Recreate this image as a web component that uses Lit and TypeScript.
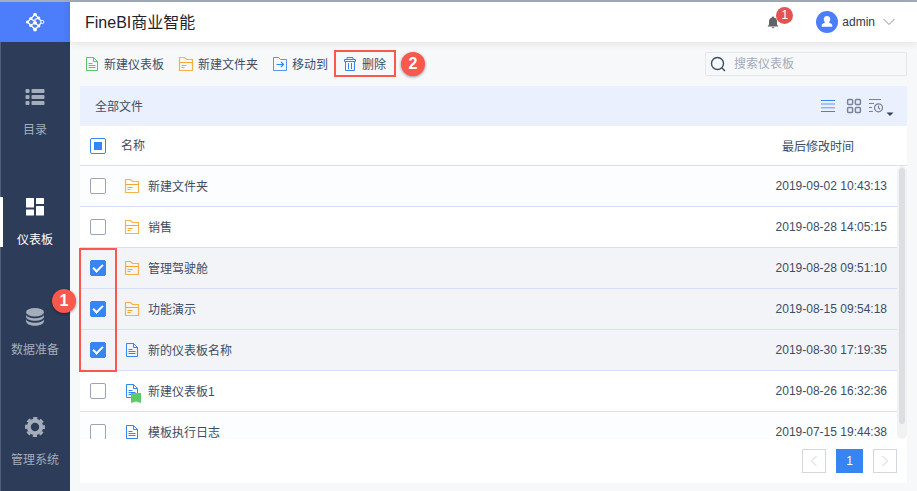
import { LitElement, html, css, svg, nothing } from "lit";
import { customElement, state } from "lit/decorators.js";
import { classMap } from "lit/directives/class-map.js";

type Kind = "folder" | "doc" | "flagged";

interface Entry {
  name: string;
  time: string;
  kind: Kind;
  checked: boolean;
}

const docShape = svg`
  <path d="M2.500 1.500h7l4 4v9h-11z" />
  <path d="M9.500 1.500v4h4M4.500 7.500h4M4.500 9.500h7M4.500 11.500h7" />`;

const folderShape = svg`
  <path d="M1.500 14.500v-13h5l2 2h6v11z" stroke-width="1.200" opacity=".85" />
  <path d="M1.500 6.500h13M3.500 9.500h5M3.500 11.500h3" />`;

const icons = {
  logo: html`<svg class="logo" viewBox="0 0 20 20" width="20" height="20" aria-hidden="true">
    <g fill="none" stroke="#fff" stroke-width="1.200">
      <path d="M10 2.500 2.500 10l7.500 7.500M10 2.500l3.500 3.500M10 17.500l3.500-3.500M5.800 6.500 9 9M5.800 13.500 10 10.500l3.500 3.500M13.500 6 10 7.500v3M13.500 6 16 9M13.500 14 16 11" />
    </g>
    <g fill="#fff">
      <circle cx="10" cy="2.500" r="1.800" /><circle cx="2.500" cy="10" r="1.600" />
      <circle cx="10" cy="17.500" r="2" /><circle cx="5.800" cy="6.500" r="1.600" />
      <circle cx="5.800" cy="13.500" r="1.600" /><circle cx="10" cy="10.800" r="1.900" />
      <circle cx="13.800" cy="6" r="1.500" /><circle cx="13.800" cy="14" r="1.600" />
    </g>
    <circle cx="17.300" cy="10" r="1.600" fill="#4c7dfa" stroke="#fff" />
  </svg>`,
  catalog: html`<svg viewBox="0 0 20 20" width="20" height="20" fill="currentColor" aria-hidden="true">
    <rect x="0.500" y="2" width="4" height="4" rx="1" /><rect x="6.500" y="2" width="13" height="4" rx="1" />
    <rect x="0.500" y="8" width="4" height="4" rx="1" /><rect x="6.500" y="8" width="13" height="4" rx="1" />
    <rect x="0.500" y="14" width="4" height="4" rx="1" /><rect x="6.500" y="14" width="13" height="4" rx="1" />
  </svg>`,
  board: html`<svg viewBox="0 0 20 20" width="20" height="20" fill="currentColor" aria-hidden="true">
    <rect x="1" y="1" width="8" height="9.500" rx=".5" /><rect x="11" y="1" width="8" height="6" rx=".5" />
    <rect x="1" y="12.500" width="8" height="6" rx=".5" /><rect x="11" y="9" width="8" height="9.500" rx=".5" />
  </svg>`,
  data: html`<svg viewBox="0 0 20 20" width="20" height="20" fill="currentColor" aria-hidden="true">
    <ellipse cx="10" cy="5.200" rx="9" ry="4.200" />
    <path d="M1 7.500c1 5 17 5 18 0v2.300c-1 5.400-17 5.400-18 0z" />
    <path d="M1 12c1 5 17 5 18 0v2.300c-1 6-17 6-18 0z" />
  </svg>`,
  gear: html`<svg viewBox="0 0 20 20" width="20" height="20" aria-hidden="true">
    <g fill="none" stroke="currentColor">
      <circle cx="10" cy="10" r="6.200" stroke-width="4" />
      <circle cx="10" cy="10" r="8.900" stroke-width="2.200" stroke-dasharray="4.200 2.790" stroke-dashoffset="2.100" />
    </g>
  </svg>`,
  bell: html`<svg viewBox="0 0 12 13" width="12" height="13" fill="#5f6368" aria-hidden="true">
    <path d="M6 .5c.7 0 1 .5 1 1 2 .5 3 2 3 4v3l1.500 2H.5L2 8.500v-3c0-2 1-3.500 3-4 0-.5.3-1 1-1zM4.500 11.300h3c-.3 1.300-2.700 1.300-3 0z" />
  </svg>`,
  avatar: html`<svg viewBox="0 0 22 22" width="22" height="22" aria-hidden="true">
    <circle cx="11" cy="11" r="11" fill="#4c7dfa" />
    <path d="M11 5c2.200 0 3.300 1.500 3.200 3.400-.1 1.300-.8 2.300-1.500 2.900.5 1 3.600 1 3.600 3.200v1.200H5.700v-1.200c0-2.200 3.100-2.200 3.600-3.200-.7-.6-1.400-1.600-1.500-2.900C7.700 6.500 8.800 5 11 5z" fill="#fff" />
  </svg>`,
  chevron: html`<svg viewBox="0 0 12 8" width="12" height="8" fill="none" stroke="#8a8f96" aria-hidden="true"><path d="M.5 1 6 6.500 11.500 1" /></svg>`,
  newDoc: html`<svg viewBox="0 0 16 16" width="16" height="16" fill="none" stroke="#5cc768" aria-hidden="true">${docShape}</svg>`,
  doc: html`<svg viewBox="0 0 16 16" width="16" height="16" fill="none" stroke="#3685f2" aria-hidden="true">${docShape}</svg>`,
  folder: html`<svg viewBox="0 0 16 16" width="16" height="16" fill="none" stroke="#f5a62c" aria-hidden="true">${folderShape}</svg>`,
  move: html`<svg viewBox="0 0 16 16" width="16" height="16" fill="none" stroke="#3685f2" aria-hidden="true">
    <path d="M1.500 14.500v-13h5l2 2h6v11z" opacity=".85" /><path d="M4.500 8.500h7M9 6l2.500 2.500L9 11" stroke-width="1.200" />
  </svg>`,
  trash: html`<svg viewBox="0 0 16 16" width="16" height="16" fill="none" stroke="#3685f2" aria-hidden="true">
    <path d="M5 3.500v-2h6v2M2.500 3.500h11v2h-11zM3.500 5.500v9h9v-9M6.500 7v6M9.500 7v6" />
  </svg>`,
  flag: html`<svg class="flag" viewBox="0 0 10 10" width="10" height="10" fill="#5cc96b" aria-hidden="true"><path d="M0 0h10v10L5 8.500 0 10z" /></svg>`,
  search: html`<svg viewBox="0 0 16 16" width="16" height="16" fill="none" stroke="#3d4d66" stroke-width="1.400" aria-hidden="true">
    <circle cx="7.500" cy="7.500" r="6" /><path d="m12 12 3 3" />
  </svg>`,
  list: html`<svg viewBox="0 0 16 16" width="16" height="16" fill="none" stroke="#3685f2" aria-hidden="true">
    <path d="M1 2.500h14M1 13.500h14" /><path d="M1 6h14M1 9.800h14" opacity=".8" />
  </svg>`,
  grid: html`<svg viewBox="0 0 16 16" width="16" height="16" fill="none" stroke="#76839a" stroke-width="1.500" aria-hidden="true">
    <rect x="1.600" y="1.600" width="5" height="5" rx="1" /><rect x="9.400" y="1.600" width="5" height="5" rx="1" />
    <rect x="1.600" y="9.400" width="5" height="5" rx="1" /><rect x="9.400" y="9.400" width="5" height="5" rx="1" />
  </svg>`,
  sort: html`<svg viewBox="0 0 26 20" width="26" height="20" fill="none" stroke="#76839a" stroke-width="1.200" aria-hidden="true">
    <path d="M1 1.500h12M1 5.500h5M1 9.500h3M1 13.500h4" /><circle cx="10.500" cy="9.800" r="4" /><path d="M10.500 7.500v2.500l1.500 1.200" />
    <path d="M18.500 14.500h7L22 18z" fill="#33435e" stroke="none" />
  </svg>`,
  prev: html`<svg viewBox="0 0 8 12" width="8" height="12" fill="none" stroke="#cdd1d8" aria-hidden="true"><path d="M6.500 1 1.500 6l5 5" /></svg>`,
  next: html`<svg viewBox="0 0 8 12" width="8" height="12" fill="none" stroke="#cdd1d8" aria-hidden="true"><path d="m1.500 1 5 5-5 5" /></svg>`,
};

const base = css`
  * {
    box-sizing: border-box;
  }
  button {
    display: flex;
    align-items: center;
    margin: 0;
    padding: 0;
    border: 0;
    background: none;
    color: inherit;
    font: inherit;
    cursor: pointer;
  }
  svg {
    display: block;
    flex: none;
  }
  .text {
    padding-top: 2px;
  }
`;

@customElement("side-nav")
export class SideNav extends LitElement {
  static styles = [
    base,
    css`
      :host {
        display: flex;
        flex-direction: column;
        background: #2d3d59;
        border-left: 1px solid #51607a;
      }
      .brand {
        display: flex;
        align-items: center;
        justify-content: center;
        height: 40px;
        margin-left: -1px;
        background: #4c7dfa;
      }
      nav {
        display: flex;
        flex-direction: column;
        gap: 60px;
        padding-top: 45px;
        margin-left: -1px;
      }
      .item {
        display: flex;
        flex-direction: column;
        align-items: center;
        justify-content: space-between;
        height: 50px;
        border-left: 3px solid transparent;
        padding-right: 3px;
        color: #a5adba;
        text-decoration: none;
        line-height: 14px;
      }
      .active {
        border-color: #fff;
        color: #fff;
      }
    `,
  ];

  render() {
    const items = [
      { label: "目录", icon: icons.catalog },
      { label: "仪表板", icon: icons.board, active: true },
      { label: "数据准备", icon: icons.data },
      { label: "管理系统", icon: icons.gear },
    ];
    return html`
      <div class="brand">${icons.logo}</div>
      <nav>
        ${items.map(
          (i) => html`<a href="#" class=${classMap({ item: true, active: !!i.active })}>${i.icon}<span>${i.label}</span></a>`,
        )}
      </nav>
    `;
  }
}

@customElement("file-table")
export class FileTable extends LitElement {
  @state() private entries: Entry[] = [
    { name: "新建文件夹", time: "2019-09-02 10:43:13", kind: "folder", checked: false },
    { name: "销售", time: "2019-08-28 14:05:15", kind: "folder", checked: false },
    { name: "管理驾驶舱", time: "2019-08-28 09:51:10", kind: "folder", checked: true },
    { name: "功能演示", time: "2019-08-15 09:54:18", kind: "folder", checked: true },
    { name: "新的仪表板名称", time: "2019-08-30 17:19:35", kind: "doc", checked: true },
    { name: "新建仪表板1", time: "2019-08-26 16:32:36", kind: "flagged", checked: false },
    { name: "模板执行日志", time: "2019-07-15 19:44:38", kind: "doc", checked: false },
  ];

  static styles = [
    base,
    css`
      :host {
        display: flex;
        flex-direction: column;
        position: relative;
        min-height: 0;
      }
      table {
        display: flex;
        flex-direction: column;
        flex: 1;
        min-height: 0;
      }
      thead,
      tbody {
        display: block;
      }
      tbody {
        flex: 1;
        min-height: 0;
        overflow: hidden;
        margin-right: 10px;
      }
      tr {
        display: flex;
        align-items: center;
        height: 41px;
        padding: 0 10px;
        border-bottom: 1px solid #d5e1f9;
      }
      thead tr {
        height: 40px;
      }
      tbody tr:nth-child(odd) {
        background: #fbfdff;
      }
      tbody tr.selected {
        background: #f2f4f8;
      }
      th,
      td {
        display: flex;
        align-items: center;
        padding: 0;
        font-weight: normal;
      }
      .name {
        flex: 1;
        gap: 8px;
        padding-left: 18px;
      }
      th.name {
        padding-left: 15px;
      }
      th.time {
        padding-right: 43px;
      }
      .kind {
        position: relative;
      }
      .flag {
        position: absolute;
        left: 7px;
        top: 10px;
      }
      input {
        appearance: none;
        display: flex;
        align-items: center;
        justify-content: center;
        width: 16px;
        height: 16px;
        margin: 0;
        border: 1px solid #9ba4b3;
        border-radius: 2px;
        background: #fff;
      }
      input:indeterminate {
        border-color: #3685f2;
      }
      input:indeterminate::after {
        content: "";
        width: 8px;
        height: 8px;
        background: #3685f2;
      }
      input:checked {
        border-color: #3685f2;
        background: #3685f2;
      }
      input:checked::after {
        content: "";
        width: 8px;
        height: 4px;
        border: solid #fff;
        border-width: 0 0 2px 2px;
        transform: translateY(-1px) rotate(-45deg);
      }
      .track {
        position: absolute;
        right: 0;
        top: 40px;
        bottom: 0;
        width: 10px;
        padding: 2px 2px 15px;
        border-radius: 5px;
        background: #f2f2f3;
      }
      .thumb {
        height: 100%;
        border-radius: 3px;
        background: #dcdee2;
      }
      .callout {
        position: absolute;
        left: -1px;
        top: 122px;
        width: 38px;
        height: 124px;
        border: 2px solid #fa584d;
        pointer-events: none;
      }
    `,
  ];

  private toggle(index: number) {
    this.entries = this.entries.map((e, i) => (i === index ? { ...e, checked: !e.checked } : e));
  }

  private toggleAll() {
    const all = this.entries.every((e) => e.checked);
    this.entries = this.entries.map((e) => ({ ...e, checked: !all }));
  }

  render() {
    const count = this.entries.filter((e) => e.checked).length;
    return html`
      <table>
        <thead>
          <tr>
            <th>
              <input
                type="checkbox"
                aria-label="全选"
                .indeterminate=${count > 0 && count < this.entries.length}
                .checked=${count === this.entries.length}
                @change=${this.toggleAll}
              />
            </th>
            <th class="name">名称</th>
            <th class="time"><span class="text">最后修改时间</span></th>
          </tr>
        </thead>
        <tbody>
          ${this.entries.map(
            (e, i) => html`<tr class=${classMap({ selected: e.checked })}>
              <td>
                <input type="checkbox" aria-label=${e.name} .checked=${e.checked} @change=${() => this.toggle(i)} />
              </td>
              <td class="name">
                <span class="kind">
                  ${e.kind === "folder" ? icons.folder : icons.doc}${e.kind === "flagged" ? icons.flag : nothing}
                </span>
                <span class="text">${e.name}</span>
              </td>
              <td class="time">${e.time}</td>
            </tr>`,
          )}
        </tbody>
      </table>
      <div class="track"><div class="thumb"></div></div>
      <div class="callout"></div>
    `;
  }
}

@customElement("app-root")
export class AppRoot extends LitElement {
  static styles = [
    base,
    css`
      :host {
        display: grid;
        grid-template-columns: 70px minmax(0, 1fr);
        position: relative;
        height: 100vh;
        border-top: 2px solid #a3adb9;
        box-sizing: border-box;
        background: #f7f8fa;
        color: #3d4d66;
        font: 12px/18px "Liberation Sans", "Noto Sans CJK SC", sans-serif;
      }
      .main {
        display: flex;
        flex-direction: column;
        min-height: 0;
      }
      header {
        display: flex;
        align-items: center;
        height: 40px;
        padding: 0 22px 0 15px;
        background: #fff;
        box-shadow: 0 1px 8px #0000001a;
      }
      h1 {
        flex: 1;
        margin: 0;
        font-size: 16px;
        line-height: 24px;
        font-weight: normal;
        color: #1f2329;
      }
      .alerts {
        position: relative;
        margin-right: 37px;
      }
      .badge {
        position: absolute;
        left: 9px;
        top: -9px;
        width: 17px;
        height: 17px;
        border-radius: 9px;
        background: #e65251;
        color: #fff;
        line-height: 17px;
        text-align: center;
      }
      .user {
        gap: 4px;
        color: #33373d;
      }
      .user .chevron {
        padding-left: 4px;
      }
      .toolbar {
        display: flex;
        align-items: center;
        gap: 14px;
        height: 44px;
        padding: 0 10px 0 14px;
      }
      .toolbar button {
        position: relative;
        gap: 4px;
      }
      .callout {
        position: absolute;
        inset: -4px -10px -3px -8px;
        border: 2px solid #fa584d;
      }
      .step {
        position: absolute;
        width: 24px;
        height: 24px;
        border-radius: 12px;
        background: #fa584d;
        box-shadow: 0 1px 3px #00000073;
        color: #fff;
        font-size: 16px;
        font-weight: bold;
        line-height: 24px;
        text-align: center;
      }
      .step.first {
        left: 52px;
        top: 287px;
      }
      .step.second {
        left: 59px;
        top: -2px;
      }
      .search {
        display: flex;
        align-items: center;
        gap: 8px;
        width: 202px;
        height: 24px;
        margin-left: auto;
        padding: 0 4px;
        border: 1px solid #e3e6ea;
        border-radius: 2px;
      }
      .search input {
        flex: 1;
        min-width: 0;
        padding: 0;
        border: 0;
        outline: 0;
        background: none;
        color: inherit;
        font: inherit;
      }
      .search input::placeholder {
        color: #a3abb9;
      }
      .panel {
        display: flex;
        flex-direction: column;
        flex: 1;
        min-height: 0;
        margin: 0 10px 8px;
        background: #fff;
      }
      .path {
        display: flex;
        align-items: center;
        gap: 10px;
        height: 40px;
        padding: 0 13px 0 15px;
        background: #eaf0fd;
      }
      .path span {
        flex: 1;
      }
      .path .sort {
        margin-left: -4px;
        padding-top: 4px;
      }
      file-table {
        flex: 1;
      }
      .pager {
        display: flex;
        justify-content: flex-end;
        gap: 10px;
        padding: 10px;
      }
      .pager button {
        justify-content: center;
        width: 24px;
        height: 24px;
        border: 1px solid #d3d6dc;
      }
      .pager .current {
        width: 27px;
        border: 0;
        background: #3685f2;
        color: #fff;
      }
    `,
  ];

  render() {
    return html`
      <side-nav></side-nav>
      <div class="main">
        <header>
          <h1 class="text">FineBI商业智能</h1>
          <button class="alerts" aria-label="消息">${icons.bell}<span class="badge">1</span></button>
          <button class="user">${icons.avatar}<span>admin</span><span class="chevron">${icons.chevron}</span></button>
        </header>
        <div class="toolbar">
          <button>${icons.newDoc}<span class="text">新建仪表板</span></button>
          <button>${icons.folder}<span class="text">新建文件夹</span></button>
          <button>${icons.move}<span class="text">移动到</span></button>
          <button>
            ${icons.trash}<span class="text">删除</span><span class="callout"></span><span class="step second">2</span>
          </button>
          <label class="search">${icons.search}<input type="text" aria-label="搜索" placeholder="搜索仪表板" /></label>
        </div>
        <section class="panel">
          <div class="path">
            <span class="text">全部文件</span>
            <button aria-label="列表">${icons.list}</button>
            <button aria-label="网格">${icons.grid}</button>
            <button class="sort" aria-label="排序">${icons.sort}</button>
          </div>
          <file-table></file-table>
          <div class="pager">
            <button aria-label="上一页">${icons.prev}</button>
            <button class="current">1</button>
            <button aria-label="下一页">${icons.next}</button>
          </div>
        </section>
      </div>
      <div class="step first">1</div>
    `;
  }
}
